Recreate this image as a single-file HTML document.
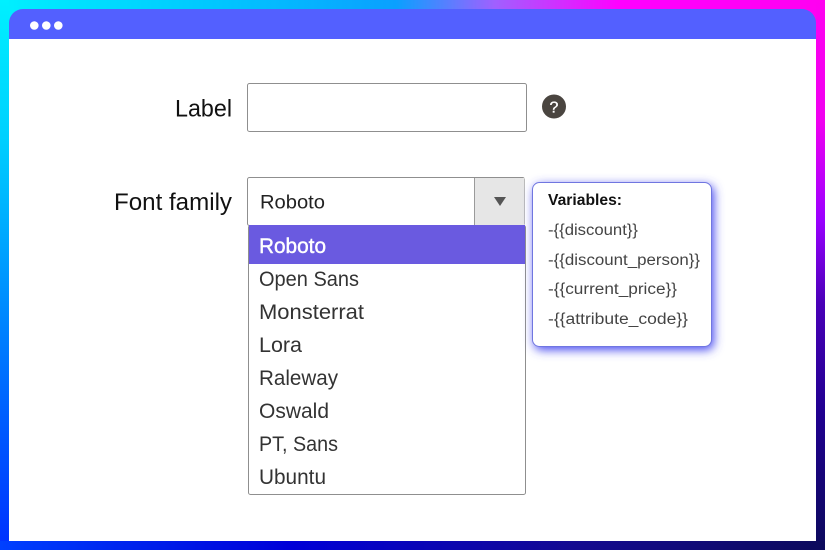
<!DOCTYPE html>
<html lang="en">
<head>
<meta charset="utf-8">
<title>Font family</title>
<style>
html,body{margin:0;padding:0;background:#fff}
body{width:825px;height:550px;overflow:hidden}
svg{display:block}
text{font-family:"Liberation Sans",sans-serif}
</style>
</head>
<body>
<svg width="825" height="550" viewBox="0 0 825 550" xmlns="http://www.w3.org/2000/svg">
<defs>
<linearGradient id="t" x1="0" x2="1" y1="0" y2="0">
<stop offset="0" stop-color="#00f0ff"/><stop offset=".25" stop-color="#00c8ff"/><stop offset=".48" stop-color="#0aa0ff"/><stop offset=".6" stop-color="#a060ff"/><stop offset=".75" stop-color="#ff00ff"/><stop offset="1" stop-color="#ff00f0"/>
</linearGradient>
<linearGradient id="l" x1="0" x2="0" y1="0" y2="1">
<stop offset="0" stop-color="#00f0ff"/><stop offset=".25" stop-color="#00d0ff"/><stop offset=".5" stop-color="#0098ff"/><stop offset=".75" stop-color="#0060ff"/><stop offset="1" stop-color="#0030ff"/>
</linearGradient>
<linearGradient id="r" x1="0" x2="0" y1="0" y2="1">
<stop offset="0" stop-color="#ff00f0"/><stop offset=".22" stop-color="#f000f0"/><stop offset=".4" stop-color="#9a00ff"/><stop offset=".55" stop-color="#4a00b8"/><stop offset=".75" stop-color="#200090"/><stop offset="1" stop-color="#0c0a5c"/>
</linearGradient>
<linearGradient id="b" x1="0" x2="1" y1="0" y2="0">
<stop offset="0" stop-color="#0040ff"/><stop offset=".35" stop-color="#0000d8"/><stop offset=".7" stop-color="#140a90"/><stop offset="1" stop-color="#0c0a5c"/>
</linearGradient>
<filter id="sh" x="-20%" y="-20%" width="140%" height="140%">
<feDropShadow dx="2" dy="3" stdDeviation="5" flood-color="#4a4cf0" flood-opacity="1"/>
</filter>
</defs>

<!-- gradient frame -->
<rect x="0" y="0" width="825" height="30" fill="url(#t)"/>
<rect x="0" y="0" width="9" height="550" fill="url(#l)"/>
<rect x="816" y="0" width="9" height="550" fill="url(#r)"/>
<rect x="0" y="541" width="825" height="9" fill="url(#b)"/>

<!-- window -->
<rect x="9" y="39" width="807" height="502" fill="#fff"/>
<path d="M9 39V23a14 14 0 0 1 14-14H802a14 14 0 0 1 14 14V39Z" fill="#5360ff"/>
<circle cx="34.300" cy="25.500" r="4.300" fill="#fff"/>
<circle cx="46.300" cy="25.500" r="4.300" fill="#fff"/>
<circle cx="58.300" cy="25.500" r="4.300" fill="#fff"/>

<!-- label row -->
<text x="175" y="116.500" font-size="24" fill="#111" textLength="57" lengthAdjust="spacingAndGlyphs">Label</text>
<rect x="247.500" y="83.500" width="279" height="48" rx="2" fill="#fff" stroke="#8f8f8f"/>
<circle cx="554" cy="106.500" r="12" fill="#4a4540"/>
<text x="554" y="112.500" font-size="16" fill="#fff" stroke="#fff" stroke-width=".3" text-anchor="middle">?</text>

<!-- font family row -->
<text x="114" y="210" font-size="24" fill="#111" textLength="118" lengthAdjust="spacingAndGlyphs">Font family</text>

<!-- select -->
<rect x="247.500" y="177.500" width="277" height="48" rx="2" fill="#fff" stroke="#8f8f8f"/>
<rect x="474.500" y="178" width="50" height="47" fill="#e6e6e6"/>
<path d="M474.500 178V225" stroke="#9a9a9a" fill="none"/>
<path d="M494 197H506L500 206Z" fill="#555"/>
<text x="260" y="208.500" font-size="19" fill="#222" textLength="65" lengthAdjust="spacingAndGlyphs">Roboto</text>

<!-- dropdown -->
<rect x="248.500" y="225.500" width="277" height="269" rx="2" fill="#fff" stroke="#8f8f8f"/>
<rect x="249" y="225" width="276" height="39" fill="#6a5ae0"/>
<text x="259" y="253" font-size="21" font-weight="400" fill="#fff" stroke="#fff" stroke-width=".4" textLength="67" lengthAdjust="spacingAndGlyphs">Roboto</text>
<g font-size="21" fill="#333">
<text x="259" y="286" textLength="100" lengthAdjust="spacingAndGlyphs">Open Sans</text>
<text x="259" y="319" textLength="105" lengthAdjust="spacingAndGlyphs">Monsterrat</text>
<text x="259" y="352" textLength="43" lengthAdjust="spacingAndGlyphs">Lora</text>
<text x="259" y="385" textLength="79" lengthAdjust="spacingAndGlyphs">Raleway</text>
<text x="259" y="418" textLength="70" lengthAdjust="spacingAndGlyphs">Oswald</text>
<text x="259" y="451" textLength="79" lengthAdjust="spacingAndGlyphs">PT, Sans</text>
<text x="259" y="484" textLength="67" lengthAdjust="spacingAndGlyphs">Ubuntu</text>
</g>

<!-- variables tooltip -->
<rect x="532.500" y="182.500" width="179" height="164" rx="7" fill="#fff" stroke="#7076e0" filter="url(#sh)"/>
<text x="548" y="205" font-size="16" font-weight="700" fill="#111" textLength="74" lengthAdjust="spacingAndGlyphs">Variables:</text>
<g font-size="15.500" fill="#444">
<text x="548" y="235" textLength="90" lengthAdjust="spacingAndGlyphs">-{{discount}}</text>
<text x="548" y="265" textLength="152" lengthAdjust="spacingAndGlyphs">-{{discount_person}}</text>
<text x="548" y="294" textLength="129" lengthAdjust="spacingAndGlyphs">-{{current_price}}</text>
<text x="548" y="324" textLength="140" lengthAdjust="spacingAndGlyphs">-{{attribute_code}}</text>
</g>
</svg>
</body>
</html>
